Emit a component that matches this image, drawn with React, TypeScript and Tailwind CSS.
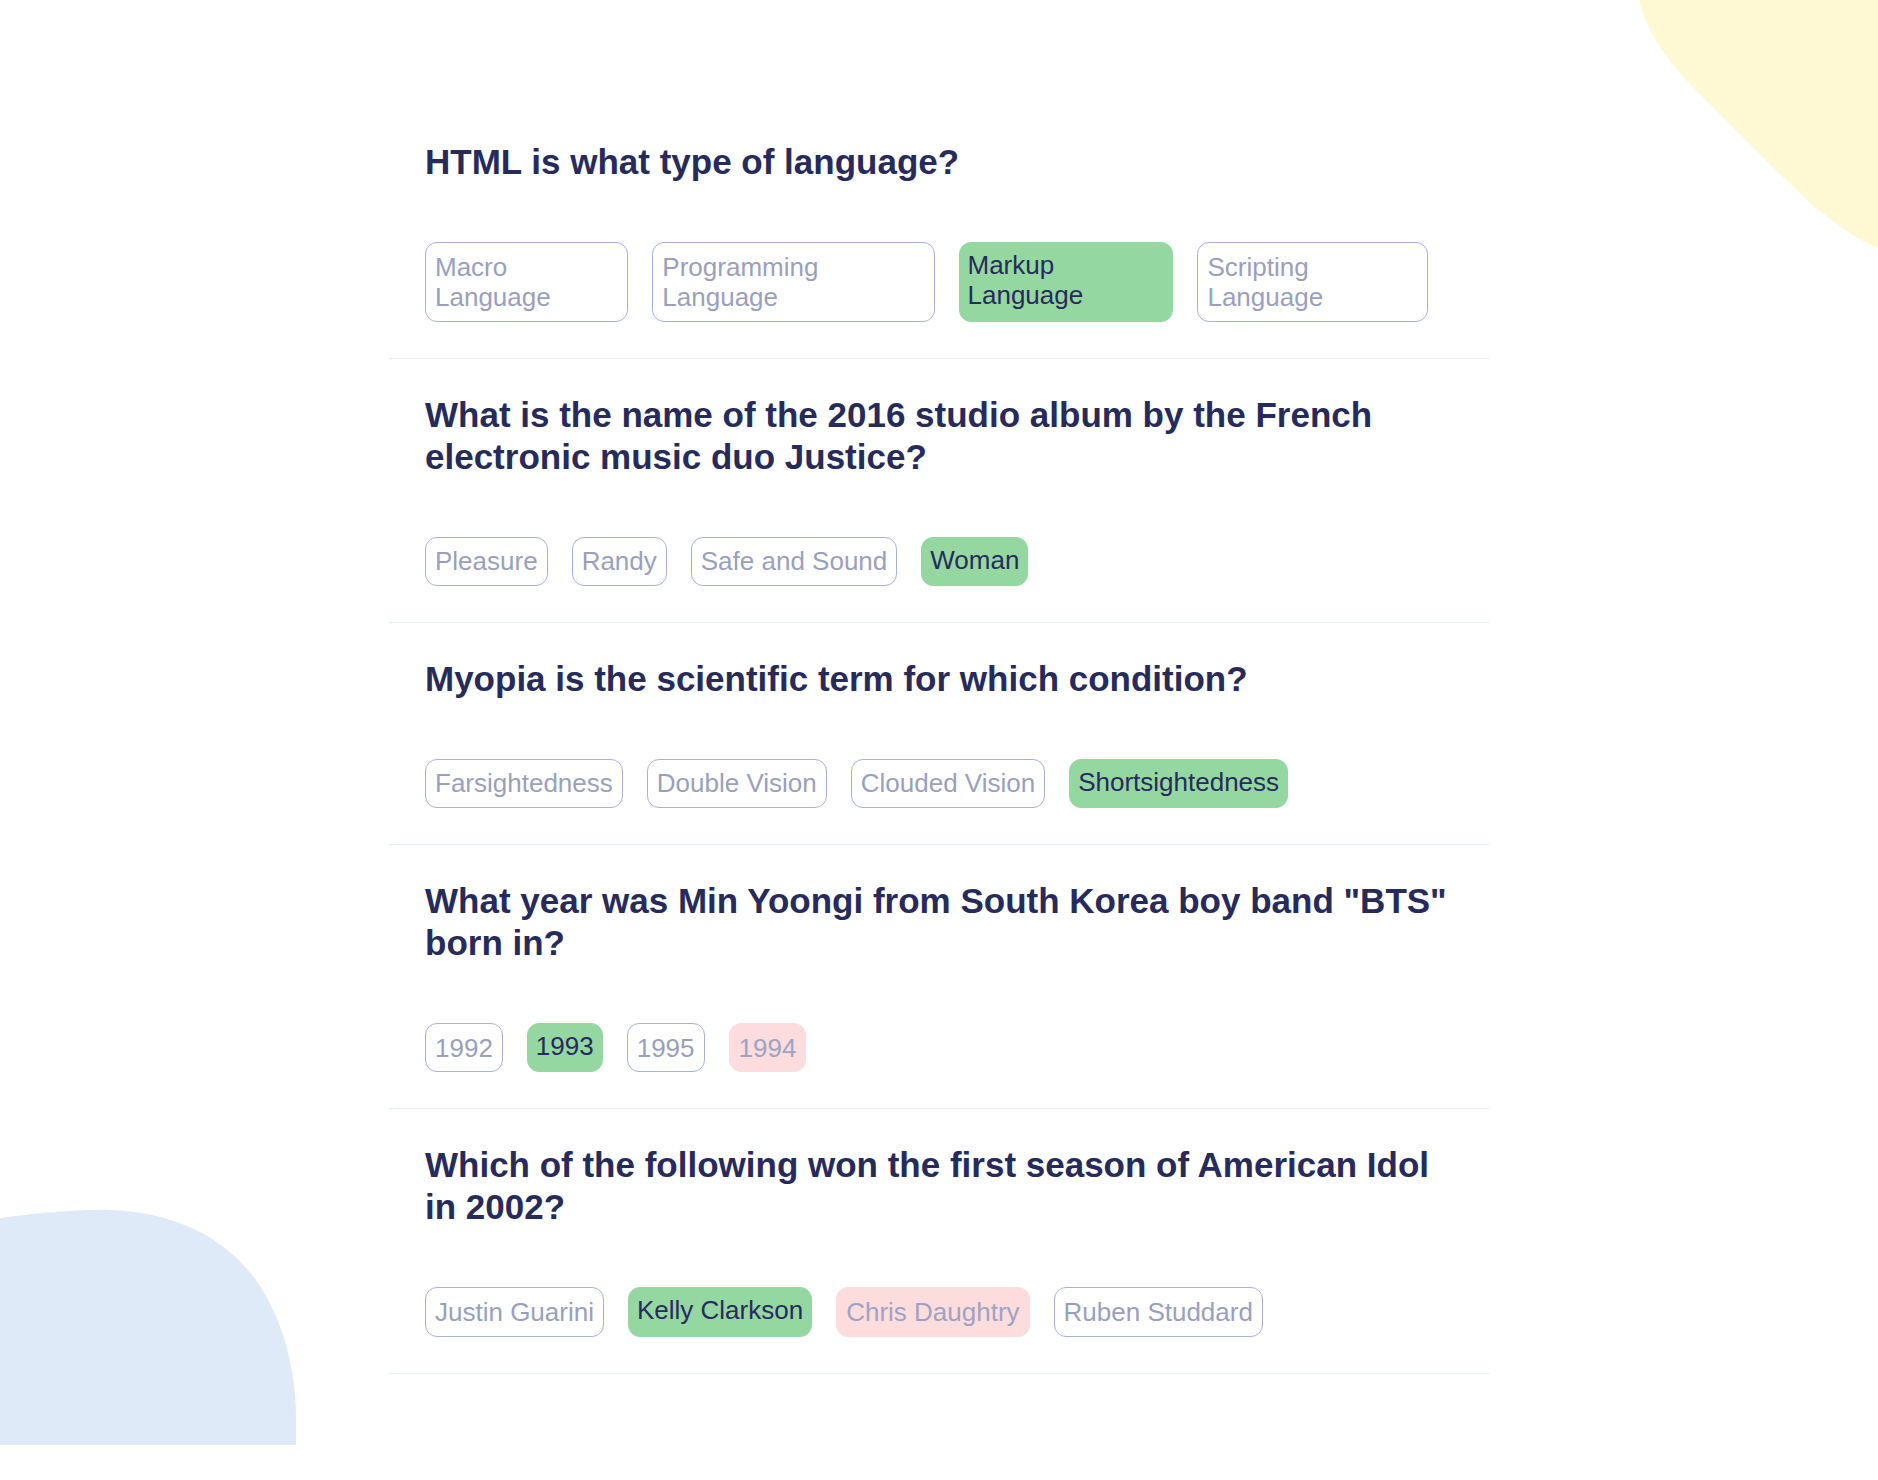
type Answer = { text: string; state?: "right" | "wrong" };

const QUESTIONS: { q: string; answers: Answer[] }[] = [
  {
    q: "HTML is what type of language?",
    answers: [
      { text: "Macro Language" },
      { text: "Programming Language" },
      { text: "Markup Language", state: "right" },
      { text: "Scripting Language" },
    ],
  },
  {
    q: "What is the name of the 2016 studio album by the French electronic music duo Justice?",
    answers: [
      { text: "Pleasure" },
      { text: "Randy" },
      { text: "Safe and Sound" },
      { text: "Woman", state: "right" },
    ],
  },
  {
    q: "Myopia is the scientific term for which condition?",
    answers: [
      { text: "Farsightedness" },
      { text: "Double Vision" },
      { text: "Clouded Vision" },
      { text: "Shortsightedness", state: "right" },
    ],
  },
  {
    q: 'What year was Min Yoongi from South Korea boy band "BTS" born in?',
    answers: [
      { text: "1992" },
      { text: "1993", state: "right" },
      { text: "1995" },
      { text: "1994", state: "wrong" },
    ],
  },
  {
    q: "Which of the following won the first season of American Idol in 2002?",
    answers: [
      { text: "Justin Guarini" },
      { text: "Kelly Clarkson", state: "right" },
      { text: "Chris Daughtry", state: "wrong" },
      { text: "Ruben Studdard" },
    ],
  },
];

function Option({ a }: { a: Answer }) {
  if (a.state === "right") {
    return (
      <button className="mr-6 rounded-xl border-[1.5px] border-[#95d7a1] bg-[#95d7a1] px-[8px] pt-[7px] pb-[10px] text-left text-[26px] leading-[30.3px] text-[#262b5c]">
        {a.text}
      </button>
    );
  }
  if (a.state === "wrong") {
    return (
      <button className="mr-6 rounded-xl border-[1.5px] border-[#fddcde] bg-[#fddcde] px-[9px] py-[8.5px] text-left text-[26px] leading-[30.3px] text-[#9fa3c2]">
        {a.text}
      </button>
    );
  }
  return (
    <button className="mr-6 rounded-xl border-[1.5px] border-[#aab1d7] bg-white px-[9px] py-[8.5px] text-left text-[26px] leading-[30.3px] text-[#9a9fbe]">
      {a.text}
    </button>
  );
}

export default function App() {
  return (
    <div
      className="relative overflow-hidden bg-white"
      style={{ fontFamily: '"Liberation Sans", Arial, sans-serif' }}
    >
      {/* yellow blob, top right */}
      <svg
        className="pointer-events-none absolute top-0 right-0"
        width="240"
        height="250"
        viewBox="0 0 240 250"
      >
        <path
          d="M1 0 C 10 38, 38 72, 72 104 C 106 138, 138 172, 178 208 C 198 224, 220 240, 240 248 L240 0 Z"
          fill="#fef8d3"
        />
      </svg>

      {/* blue blob, bottom left */}
      <svg
        className="pointer-events-none absolute bottom-0 left-0"
        width="300"
        height="241"
        viewBox="0 0 300 241"
      >
        <path
          d="M0 14 C 40 9, 80 5, 110 6 C 170 8, 222 30, 256 76 C 284 116, 296 168, 296 215 L296 241 L0 241 Z"
          fill="#deeaf7"
        />
      </svg>

      <div className="relative mx-auto w-[1100px] pt-[106px] pb-[71px]">
        {QUESTIONS.map((item) => (
          <div
            key={item.q}
            className="border-b border-[#e3eef9] pt-[35px] pb-[36px] pl-[36px] pr-[30px]"
          >
            <h2 className="text-[35px] leading-[42px] font-bold text-[#262b5c]">
              {item.q}
            </h2>
            <div className="mt-[59px] flex items-start pr-[7px]">
              {item.answers.map((a) => (
                <Option key={a.text} a={a} />
              ))}
            </div>
          </div>
        ))}
      </div>
    </div>
  );
}
